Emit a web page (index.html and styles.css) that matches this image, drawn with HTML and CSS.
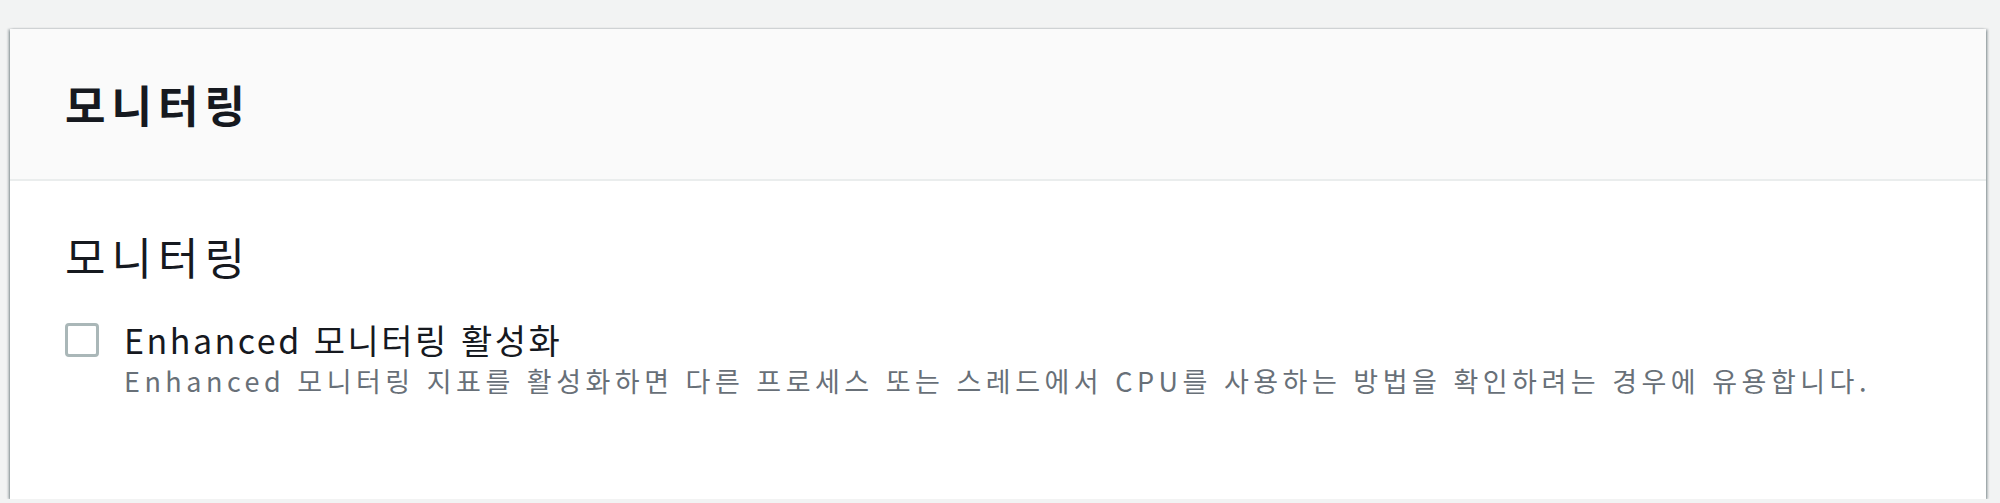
FILE: index.html
```html
<!DOCTYPE html>
<html lang="ko">
<head>
    <meta charset="UTF-8">
    <meta name="viewport" content="width=device-width, initial-scale=1.0">
    <title>모니터링</title>
    <link rel="stylesheet" href="styles.css">
</head>
<body>
    <div class="panel">
        <div class="panel-header">
            <h2>모니터링</h2>
        </div>
        <div class="panel-body">
            <h3>모니터링</h3>
            <label class="check-row">
                <input type="checkbox" class="check-box">
                <span class="check-text">
                    <span class="check-label">Enhanced 모니터링 활성화</span>
                    <span class="check-desc">Enhanced 모니터링 지표를 활성화하면 다른 프로세스 또는 스레드에서 CPU를 사용하는 방법을 확인하려는 경우에 유용합니다.</span>
                </span>
            </label>
        </div>
    </div>
</body>
</html>
```

FILE: styles.css
```css
body {
    font-family: "Noto Sans CJK KR", "Liberation Sans", sans-serif;
    background-color: #f2f3f3;
    color: #16191f;
    margin: 0;
    padding: 29px 14px 0 10px;
}
.panel {
    background-color: #ffffff;
    box-shadow: 0 2px 2px 0 rgba(0, 28, 36, 0.5), 2px 0 2px 0 rgba(0, 28, 36, 0.22), -2px 0 2px 0 rgba(0, 28, 36, 0.22);
}
.panel-header {
    background-color: #fafafa;
    border-bottom: 2px solid #eaeded;
    padding: 45px 55px;
}
.panel-header h2 {
    margin: 0;
    font-size: 44px;
    line-height: 60px;
    font-weight: 700;
    letter-spacing: 6px;
}
.panel-body {
    padding: 45px 55px 100px;
}
.panel-body h3 {
    margin: 0 0 34px;
    font-size: 44px;
    line-height: 60px;
    font-weight: 400;
    letter-spacing: 6px;
}
.check-row {
    display: flex;
    gap: 25px;
}
.check-box {
    appearance: none;
    width: 34px;
    height: 34px;
    margin: 3px 0 0;
    border: 3px solid #aab7b8;
    border-radius: 4px;
    background-color: #ffffff;
    box-sizing: border-box;
    flex-shrink: 0;
}
.check-text {
    display: flex;
    flex-direction: column;
}
.check-label {
    font-size: 34px;
    line-height: 40px;
    letter-spacing: 2.5px;
}
.check-desc {
    margin-top: 3px;
    font-size: 27px;
    line-height: 36px;
    letter-spacing: 4.5px;
    color: #687078;
}
```
